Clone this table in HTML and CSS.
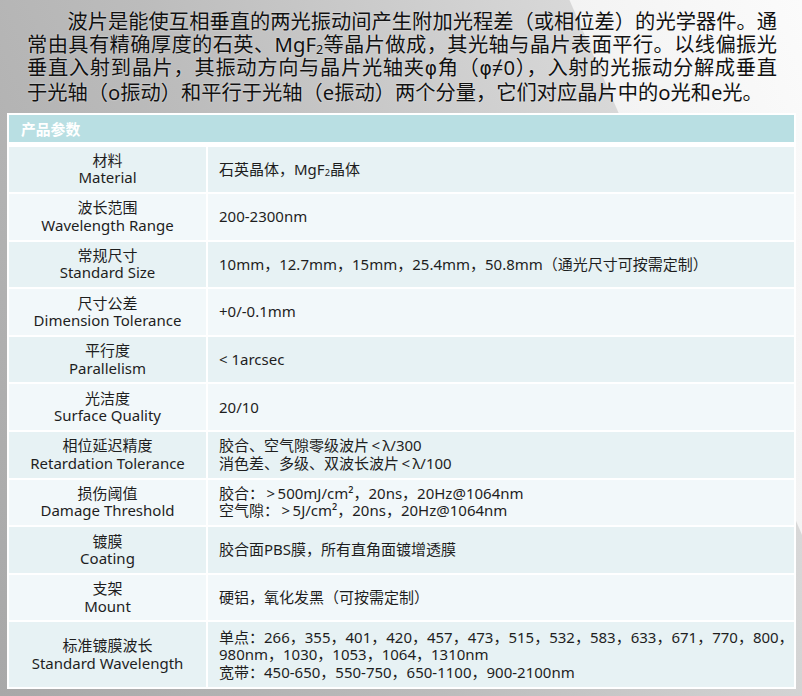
FILE: index.html
```html
<!DOCTYPE html>
<html lang="zh-CN">
<head>
<meta charset="utf-8">
<title>波片</title>
<link rel="stylesheet" href="styles.css">
</head>
<body>
<main class="page">
  <div class="intro">
    <span class="line just first">波片是能使互相垂直的两光振动间产生附加光程差（或相位差）的光学器件。通</span>
    <span class="line just">常由具有精确厚度的石英、MgF<sub>2</sub>等晶片做成，其光轴与晶片表面平行。以线偏振光</span>
    <span class="line just">垂直入射到晶片，其振动方向与晶片光轴夹<span class="greek">φ</span>角（<span class="greek">φ</span>≠0），入射的光振动分解成垂直</span>
    <span class="line">于光轴（o振动）和平行于光轴（e振动）两个分量，它们对应晶片中的o光和e光。</span>
  </div>

  <section class="spec">
    <div class="spec-head">产品参数</div>
    <div class="spec-rows">
      <div class="row odd">
        <div class="k"><span>材料</span><span>Material</span></div>
        <div class="v"><p>石英晶体，MgF<sub>2</sub>晶体</p></div>
      </div>
      <div class="row even">
        <div class="k"><span>波长范围</span><span>Wavelength Range</span></div>
        <div class="v"><p>200-2300nm</p></div>
      </div>
      <div class="row odd">
        <div class="k"><span>常规尺寸</span><span>Standard Size</span></div>
        <div class="v"><p>10mm，12.7mm，15mm，25.4mm，50.8mm（通光尺寸可按需定制）</p></div>
      </div>
      <div class="row even">
        <div class="k"><span>尺寸公差</span><span>Dimension Tolerance</span></div>
        <div class="v"><p>+0/-0.1mm</p></div>
      </div>
      <div class="row odd">
        <div class="k"><span>平行度</span><span>Parallelism</span></div>
        <div class="v"><p>&lt;&nbsp;1arcsec</p></div>
      </div>
      <div class="row even">
        <div class="k"><span>光洁度</span><span>Surface Quality</span></div>
        <div class="v"><p>20/10</p></div>
      </div>
      <div class="row odd">
        <div class="k"><span>相位延迟精度</span><span>Retardation Tolerance</span></div>
        <div class="v"><p>胶合、空气隙零级波片&thinsp;&lt;&thinsp;λ/300<br>消色差、多级、双波长波片&thinsp;&lt;&thinsp;λ/100</p></div>
      </div>
      <div class="row even">
        <div class="k"><span>损伤阈值</span><span>Damage Threshold</span></div>
        <div class="v"><p>胶合：&thinsp;&gt;&thinsp;500mJ/cm²，20ns，20Hz@1064nm<br>空气隙：&thinsp;&gt;&thinsp;5J/cm²，20ns，20Hz@1064nm</p></div>
      </div>
      <div class="row odd">
        <div class="k"><span>镀膜</span><span>Coating</span></div>
        <div class="v"><p>胶合面PBS膜，所有直角面镀增透膜</p></div>
      </div>
      <div class="row even">
        <div class="k"><span>支架</span><span>Mount</span></div>
        <div class="v"><p>硬铝，氧化发黑（可按需定制）</p></div>
      </div>
      <div class="row odd tall">
        <div class="k"><span>标准镀膜波长</span><span>Standard Wavelength</span></div>
        <div class="v"><p>单点：266，355，401，420，457，473，515，532，583，633，671，770，800，<br>980nm，1030，1053，1064，1310nm<br>宽带：450-650，550-750，650-1100，900-2100nm</p></div>
      </div>
    </div>
  </section>
</main>
</body>
</html>
```

FILE: styles.css
```css
html, body {
  margin: 0;
  padding: 0;
}

body {
  width: 802px;
  height: 696px;
  overflow: hidden;
  font-family: "Noto Sans", "Noto Sans CJK SC", sans-serif;
  color: #1a1a1a;
  background:
    linear-gradient(66.5deg, #a8a8a8 0%, #bcbcbc 40%, #d8d8d8 78.9%, #f3f3f3 79%, #fbfbfb 100%);
}

.page {
  display: flex;
  flex-direction: column;
}

.intro {
  padding: 10px 25px 0 27px;
  font-size: 20.25px;
  line-height: 23.2px;
  color: #111;
  text-shadow: 0 0 2px rgba(255, 255, 255, 0.6);
}

.intro .line {
  display: block;
  white-space: nowrap;
}

.intro .line.just {
  text-align: justify;
  text-align-last: justify;
}

.intro .line.first {
  text-indent: 2em;
}

.greek {
  font-family: "DejaVu Sans", sans-serif;
  font-size: 0.92em;
}

.intro sub,
.v sub {
  font-size: 0.62em;
  line-height: 0;
  vertical-align: -0.15em;
}

.spec {
  margin: 9px 0 0 7px;
  width: 785px;
  padding: 2px;
  background: #ffffff;
}

.spec-head {
  height: 26.7px;
  display: flex;
  align-items: center;
  padding-left: 12px;
  background: #b9dfe3;
  color: #ffffff;
  font-weight: 700;
  font-size: 14.8px;
  font-family: "Noto Sans CJK SC", sans-serif;
}

.spec-rows {
  margin-top: 5px;
  display: flex;
  flex-direction: column;
  gap: 2px;
}

.row {
  display: grid;
  grid-template-columns: 197px 1fr;
  column-gap: 2px;
  height: 45.6px;
  font-size: 15px;
  line-height: 17.5px;
  color: #1e1e1e;
}

.row.tall {
  height: 65px;
}

.row.odd .k,
.row.odd .v {
  background: #e7f2f4;
}

.row.even .k,
.row.even .v {
  background: #f2f8fa;
}

.k {
  display: flex;
  flex-direction: column;
  align-items: center;
  justify-content: center;
  text-align: center;
}

.v {
  display: flex;
  align-items: center;
  padding-left: 11px;
  white-space: nowrap;
}

.v p {
  margin: 0;
}
```
